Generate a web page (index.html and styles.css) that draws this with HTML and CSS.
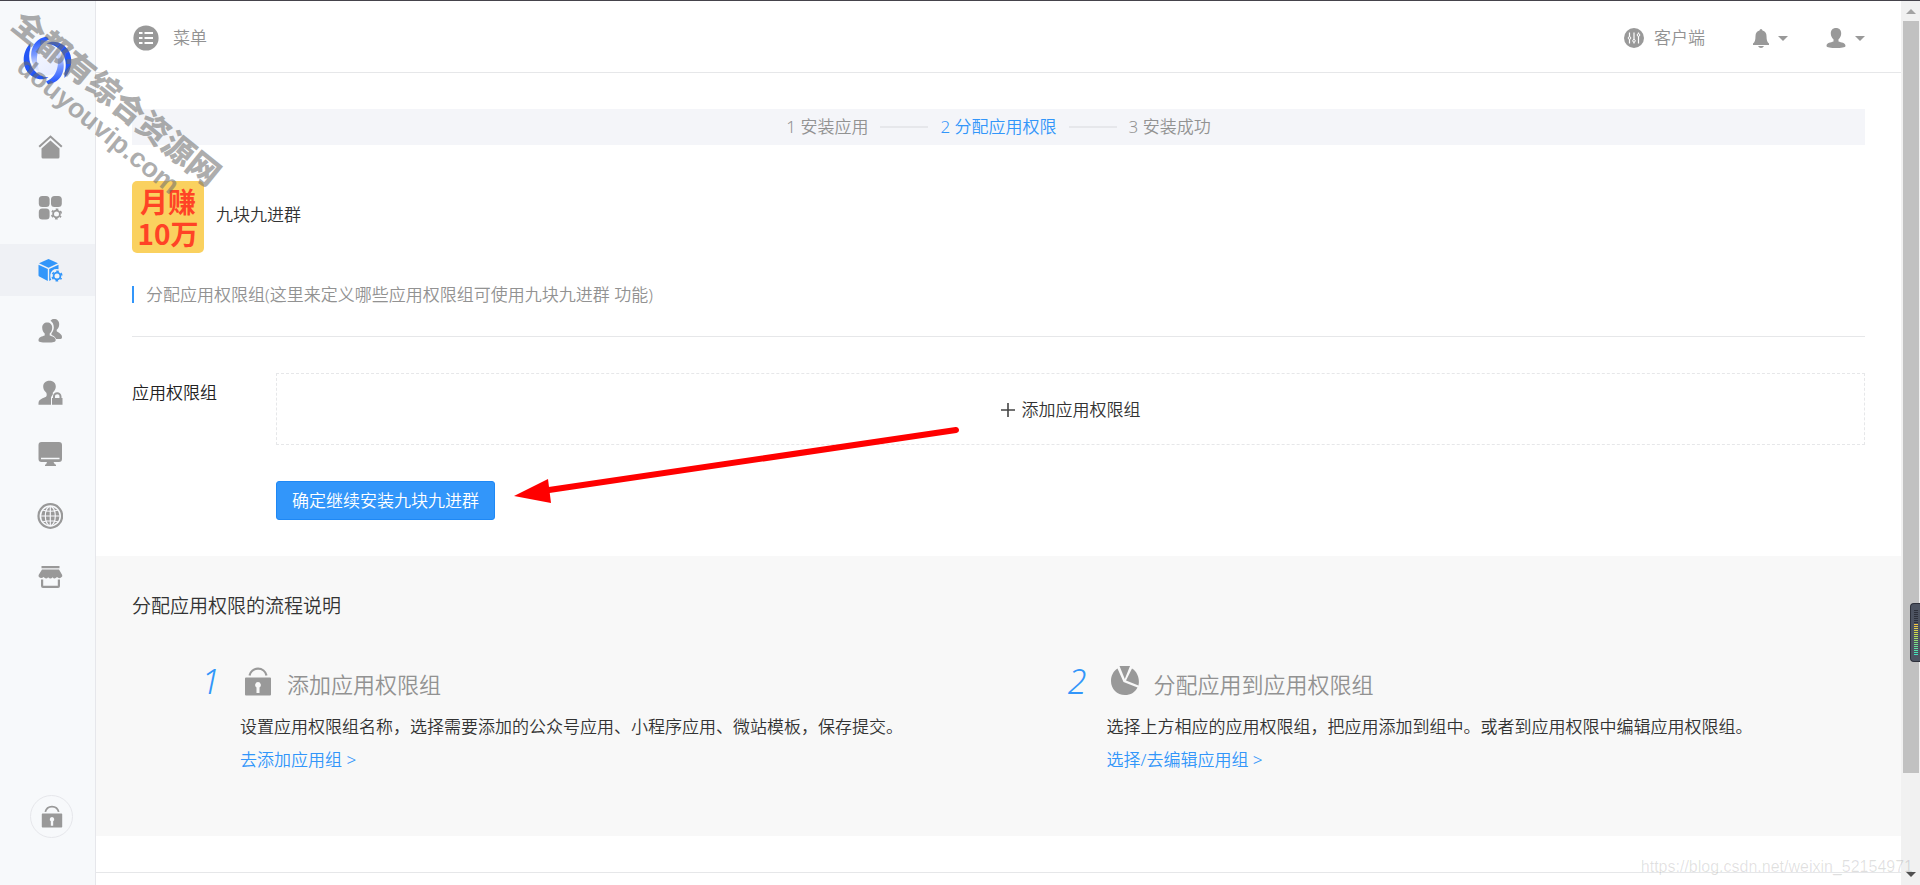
FILE: index.html
```html
<!DOCTYPE html>
<html lang="zh-CN">
<head>
<meta charset="utf-8">
<title>分配应用权限</title>
<link rel="stylesheet" href="styles.css">
</head>
<body>
<svg class="symbols" aria-hidden="true">
  <symbol id="gear" viewBox="0 0 12 12">
    <circle cx="6" cy="6" r="3.4" fill="none" stroke="currentColor" stroke-width="1.8"/>
    <circle cx="6" cy="6" r="4.8" fill="none" stroke="currentColor" stroke-width="1.6" stroke-dasharray="2.5 2.527" stroke-dashoffset="1.25" transform="rotate(30 6 6)"/>
  </symbol>
  <symbol id="lock" viewBox="0 0 28 32">
    <path d="M5.500 9.500a8.700 8.700 0 0 1 17 0" fill="none" stroke="currentColor" stroke-width="2.200"/>
    <path fill="currentColor" fill-rule="evenodd" d="M1 12.500q0-1 1-1h24q1 0 1 1v16q0 1-1 1H2q-1 0-1-1zM14 16a3 3 0 0 0-1.500 5.500v5.500h3v-5.500A3 3 0 0 0 14 16z"/>
  </symbol>
  <symbol id="person" viewBox="0 0 20 20">
    <path fill="currentColor" d="M10 0c3.300 0 5.200 2.200 5.200 5.500 0 2.600-1.200 4.400-2.700 5.700v2.300c2.500 1 7 1 7 4.500 0 1.500-4.500 2-9.500 2S.5 19.500.5 18c0-3.500 4.500-3.500 7-4.500v-2.300C6 9.900 4.800 8.100 4.800 5.500 4.800 2.200 6.700 0 10 0z"/>
  </symbol>
</svg>

<div class="page">
  <aside class="sidebar">
    <a class="brand" href="#" aria-label="首页">
      <svg width="50" height="50" viewBox="0 0 50 50" fill="none">
        <defs>
          <linearGradient id="ring" gradientUnits="userSpaceOnUse" x1="16" y1="4" x2="20" y2="40"><stop offset="0" stop-color="#2b5cff"/><stop offset=".4" stop-color="#7c9bff"/><stop offset="1" stop-color="#e4eaff" stop-opacity="0"/></linearGradient>
          <linearGradient id="core" x1="0" y1="0" x2="1" y2="1"><stop offset="0" stop-color="#f7f9ff"/><stop offset="1" stop-color="#e3e9ff"/></linearGradient>
        </defs>
        <circle cx="24.500" cy="24.500" r="15" fill="url(#core)"/>
        <g id="swirl">
          <path d="M7.500 7C-1 16-1 29 4.500 36c5 6.500 14 9.500 21 5.500C10 40 3 25 7.500 12z" fill="#2456f5"/>
          <path d="M24 .8C11 2 5.500 15 9.500 27c2 6 5 9 9 12C11 26 12.500 9 26 3.500z" fill="url(#ring)"/>
        </g>
        <use href="#swirl" transform="rotate(180 24.500 24.500)"/>
      </svg>
    </a>
    <nav class="nav" aria-label="主导航">
      <a class="nav-item" href="#" aria-label="主页"><svg class="nav-icon" viewBox="0 0 26 26"><path d="M2.200 12.800 13.500 2.500l11.300 10.300" fill="none" stroke="currentColor" stroke-width="2"/><path d="M4.500 14.500 13.500 6.500l9 8V23q0 1.500-1.500 1.500H6Q4.500 24.500 4.500 23z" fill="currentColor"/></svg></a>
      <a class="nav-item" href="#" aria-label="应用"><svg class="nav-icon" viewBox="0 0 26 26" fill="currentColor"><rect x="1.800" y="1" width="10.800" height="11" rx="3.500"/><rect x="14" y="1" width="10.800" height="11" rx="3.500"/><rect x="1.800" y="13.500" width="10.800" height="11" rx="3.500"/><use href="#gear" x="13.500" y="13" width="12" height="12"/></svg></a>
      <a class="nav-item active" href="#" aria-label="应用管理"><svg class="nav-icon" viewBox="0 0 26 26" fill="currentColor"><path d="M11.500 2 21 6.300l-9.500 4.400L2 6.300z"/><path d="M1.500 7.800 10.800 12v12L2.300 19.600q-.8-.4-.8-1.300z"/><path d="M12.200 12 21.500 7.800v4.400q-7-1-8.200 5.500-.3 3 1 5l-2.100 1.200z"/><use href="#gear" x="14" y="13" width="12" height="12"/></svg></a>
      <a class="nav-item" href="#" aria-label="用户"><svg class="nav-icon" viewBox="0 0 26 26" fill="currentColor"><path d="M13.500 2.700c1-1.300 2.300-1.700 3.700-1.700 3 0 5 2 5 5.200 0 2.600-1 4.200-2.500 5.600v1.500c1.500 1.500 5.300 2.500 5.300 5.700 0 1.200-.5 2-1.500 2h-4.500c-.8-2.500-3-3.200-4.500-4v-1.800c1.500-1.500 2.300-3.500 2.300-5.700 0-3-1-5.500-3.300-6.800z"/><path d="M10.200 4.500c3 0 5 2 5 5.300 0 2.600-1.200 4.500-2.500 5.800v1.900c2.500 1 6 1.500 6 4.500 0 2.300-2 2.500-8.500 2.500S1.500 24.300 1.500 22.300c0-3.300 3.700-3.800 6.200-4.800v-1.900c-1.300-1.300-2.500-3.200-2.500-5.800 0-3.300 2-5.300 5-5.300z" stroke="#f7f9fb" stroke-width="1" paint-order="stroke"/></svg></a>
      <a class="nav-item" href="#" aria-label="权限"><svg class="nav-icon" viewBox="0 0 26 26" fill="currentColor"><path d="M12.500.8c4 0 6.300 2.500 6.300 6 0 2.200-1.200 4-3 5.800v2.200c-1.500 1.500-1.800 2.200-1.800 4v6H1.500v-1.500c0-4.500 5-4.800 7.500-6.500 1-.8.800-2.700.3-4C7.300 11 6.200 9 6.200 6.800c0-3.500 2.300-6 6.300-6z"/><path d="M14 17.500h1.500v-1c0-3 2-4.800 4.700-4.800s4.800 1.800 4.800 4.800v1h1.500v8.300H14z" fill="#f7f9fb"/><path d="M15 18h1v-1.500c0-2.700 1.800-4.300 4.200-4.300s4.300 1.600 4.300 4.300V18h1v6.800H15zM18 18h4.500v-1.500c0-1.500-.8-2.300-2.200-2.300S18 15 18 16.500z" fill-rule="evenodd"/></svg></a>
      <a class="nav-item" href="#" aria-label="站点"><svg class="nav-icon" viewBox="0 0 26 26" fill="currentColor"><path fill-rule="evenodd" d="M4.500 1h17.500q3 0 3 3v14q0 3-3 3h-5.500l1.500 2.500h1V25H8v-1.500h1l1-2.500H4.500q-3 0-3-3V4q0-3 3-3zM4 16.800v1.400h18.500v-1.400z"/></svg></a>
      <a class="nav-item" href="#" aria-label="网络"><svg class="nav-icon" viewBox="0 0 26 26" fill="none" stroke="currentColor"><circle cx="13.300" cy="13" r="11.800" stroke-width="2.200"/><circle cx="13.300" cy="13" r="9.200" stroke="none" fill="currentColor"/><ellipse cx="13.300" cy="13" rx="5" ry="9.700" stroke="#f7f8fb" stroke-width="1.200"/><path d="M3.500 13h19.600M13.300 3v20M5.500 7q7.800 2.500 15.600 0M5.500 19q7.800-2.500 15.600 0" stroke="#f7f8fb" stroke-width="1.200"/></svg></a>
      <a class="nav-item" href="#" aria-label="商店"><svg class="nav-icon" viewBox="0 0 26 26" fill="currentColor"><path d="M4.500 2h18v2.200h-18zM5 5.500h17l3.200 5.500v1.500q-2.800 3-5.200.5-2.500 2.800-4.400.3-2.200 2.500-4.400 0-2.300 2.500-4.600-.3-2.600 2.300-5-.5V11z"/><path d="M4 15.500h2.200v6.300h14.600v-6.300H23V22q0 2-2 2H6q-2 0-2-2z"/></svg></a>
    </nav>
    <a class="sidebar-lock" href="#" aria-label="锁定"><svg width="22" height="26" viewBox="0 0 28 32"><use href="#lock"/></svg></a>
  </aside>

  <div class="content">
    <header class="topbar">
      <button class="top-button" type="button">
        <svg width="26" height="26" viewBox="0 0 26 26"><circle cx="13" cy="13" r="12.600" fill="#999"/><path d="M6 8h3.500M6 13h3.500M6 18h3.500M11.500 8H20M11.500 13H20M11.500 18H20" stroke="#fff" stroke-width="1.800"/></svg>
        <span>菜单</span>
      </button>
      <div class="top-actions">
        <a class="client" href="#">
          <svg width="20" height="20" viewBox="0 0 20 20"><circle cx="10" cy="10" r="10" fill="#999"/><path d="M5.500 4.500v11M10 4.500v11M14.500 4.500v11" stroke="#fff" stroke-width="1.200"/><g fill="#999" stroke="#fff"><circle cx="5.500" cy="10" r="1.300"/><circle cx="10" cy="12.800" r="1.300"/><circle cx="14.500" cy="7" r="1.300"/></g></svg>
          <span>客户端</span>
        </a>
        <button class="menu-button" type="button" aria-label="通知"><svg width="16" height="19" viewBox="0 0 16 19"><path fill="#999" d="M8 0q1.300 0 1.500 1.500Q13.500 2.500 13.500 7q0 6 2.500 7.500V16H0v-1.500Q2.500 13 2.500 7q0-4.500 4-5.500Q6.700 0 8 0zM5 17h6q-1 2-3 2t-3-2z"/></svg><span class="caret"></span></button>
        <button class="menu-button" type="button" aria-label="账户"><svg class="muted" width="20" height="20"><use href="#person"/></svg><span class="caret"></span></button>
      </div>
    </header>

    <main>
      <div class="section">
        <ol class="steps">
          <li>1 安装应用</li>
          <li class="current">2 分配应用权限</li>
          <li>3 安装成功</li>
        </ol>

        <div class="app">
          <div class="app-logo"><span>月赚</span><span>10万</span></div>
          <h1 class="app-name">九块九进群</h1>
        </div>

        <div class="group-title"><h2>分配应用权限组(这里来定义哪些应用权限组可使用九块九进群 功能)</h2></div>

        <form class="form">
          <label class="field-label" for="add-group">应用权限组</label>
          <button class="add-group" id="add-group" type="button">
            <svg width="14" height="14" viewBox="0 0 14 14"><path d="M7 0v14M0 7h14" stroke="#444" stroke-width="1.600"/></svg>
            <span>添加应用权限组</span>
          </button>
          <button class="submit" type="submit">确定继续安装九块九进群</button>
        </form>
      </div>

      <section class="guide">
        <h2>分配应用权限的流程说明</h2>
        <div class="guide-grid">
          <article class="guide-step">
            <div class="number">1</div>
            <div>
              <h3><svg class="muted" width="28" height="32"><use href="#lock"/></svg>添加应用权限组</h3>
              <p>设置应用权限组名称，选择需要添加的公众号应用、小程序应用、微站模板，保存提交。</p>
              <a href="#">去添加应用组 &gt;</a>
            </div>
          </article>
          <article class="guide-step">
            <div class="number">2</div>
            <div>
              <h3><svg width="28" height="30" viewBox="0 0 28 30" fill="#999"><path d="M8.500 0h10.500L13.800 13z"/><path d="M6.500 2.500 12.500 16l14 5.500C24 26.500 19.500 29 14 29 6 29 0 23 0 15 0 9.500 2.500 5 6.500 2.500z"/><path d="M21 2.500c5 3 8 10 6.500 17L15 14.500z"/></svg>分配应用到应用权限组</h3>
              <p>选择上方相应的应用权限组，把应用添加到组中。或者到应用权限中编辑应用权限组。</p>
              <a href="#">选择/去编辑应用组 &gt;</a>
            </div>
          </article>
        </div>
      </section>
    </main>
    <footer class="footer"></footer>
  </div>

  <div class="scrollbar" aria-hidden="true">
    <span class="arrow-up"></span>
    <span class="thumb"></span>
    <span class="arrow-down"></span>
  </div>
</div>

<svg class="pointer" width="450" height="84" viewBox="0 0 450 84" aria-hidden="true">
  <path d="M35 70 442 10" stroke="#f00" stroke-width="6" stroke-linecap="round"/>
  <path d="M0 76 34 59 37 83z" fill="#f00"/>
</svg>
<div class="site-mark"><span class="mark-name">全都有综合资源网</span><span class="mark-url">douyouvip.com</span></div>
<div class="meter" aria-hidden="true"><span class="meter-idle"></span><span class="meter-level"></span></div>
<div class="source-mark">https://blog.csdn.net/weixin_52154971</div>
</body>
</html>
```
FILE: styles.css
```css
* { box-sizing: border-box; }

body {
  position: relative;
  margin: 0;
  overflow: hidden;
  background: #fff;
  color: #333;
  font: 350 17px/24px "Noto Sans", "Noto Sans CJK SC", sans-serif;
}

h1, h2, h3, p, ol { margin: 0; padding: 0; font-weight: inherit; font-size: inherit; }
a { color: inherit; text-decoration: none; }
button { font: inherit; color: inherit; border: 0; background: none; padding: 0; cursor: pointer; }
svg { display: block; flex: none; }

.symbols { position: absolute; width: 0; height: 0; }
.muted { color: #999; }

.page { display: flex; min-height: 100vh; border-top: 1px solid #45434b; }

/* Sidebar */
.sidebar {
  display: flex;
  flex-direction: column;
  flex: none;
  width: 96px;
  padding: 35px 0 47px;
  background: #f7f9fb;
  border-right: 1px solid #e6e7eb;
  color: #999;
}
.brand { align-self: center; }
.nav {
  display: flex;
  flex-direction: column;
  justify-content: space-between;
  height: 482px;
  margin-top: 35px;
}
.nav-item { display: flex; align-items: center; height: 52px; padding-left: 37px; }
.nav-item.active { background: #eff1f5; color: #3296fa; }
.nav-icon { width: 26px; height: 26px; }
.sidebar-lock {
  display: flex;
  align-items: center;
  justify-content: center;
  width: 43px;
  height: 43px;
  margin: auto 0 0 30px;
  border: 1px solid #e6e7eb;
  border-radius: 50%;
}

/* Header */
.content { flex: 1; min-width: 0; }
.topbar {
  display: flex;
  align-items: center;
  justify-content: space-between;
  height: 72px;
  padding: 3px 36px 0 37px;
  border-bottom: 1px solid #e6e7e9;
  color: #929292;
}
.top-button { display: flex; align-items: center; gap: 14px; }
.top-actions { display: flex; align-items: center; }
.client { display: flex; align-items: center; gap: 10px; margin-right: 48px; }
.menu-button { display: flex; align-items: center; gap: 9px; }
.menu-button + .menu-button { margin-left: 38px; }
.caret { border: 5px solid transparent; border-top-color: #999; border-bottom: 0; }

/* Main section */
.section { padding: 36px; }
.steps {
  display: flex;
  align-items: center;
  justify-content: center;
  gap: 12px;
  height: 36px;
  list-style: none;
  background: #f4f5f9;
  color: #929292;
}
.steps li { display: flex; align-items: center; gap: 12px; }
.steps li + li::before { content: ""; width: 48px; height: 2px; background: #e6e7eb; }
.steps .current { color: #3296fa; }

.app { display: flex; align-items: center; gap: 12px; margin-top: 36px; }
.app-name { padding-bottom: 4px; }
.app-logo {
  display: flex;
  flex-direction: column;
  align-items: center;
  justify-content: center;
  width: 72px;
  height: 72px;
  border-radius: 5px;
  background: #fad15f;
  color: #ff4326;
  font: 700 28px/32px "Noto Sans CJK SC", sans-serif;
}

.group-title {
  margin-top: 33px;
  padding-bottom: 33px;
  border-bottom: 1px solid #e6e7e9;
  color: #929292;
}
.group-title h2 { padding-left: 12px; border-left: 2px solid #3296fa; line-height: 17px; }

.form {
  display: grid;
  grid-template-columns: 144px 1fr;
  row-gap: 36px;
  margin-top: 36px;
}
.field-label { padding-top: 8px; color: #222; }
.add-group {
  display: flex;
  align-items: center;
  justify-content: center;
  gap: 7px;
  height: 72px;
  padding-top: 2px;
  border: 1px dashed #e6e7e9;
}
.submit {
  grid-column: 2;
  justify-self: start;
  padding: 7px 15px 6px;
  border: 1px solid #1e88f5;
  border-radius: 3px;
  background: #3296fa;
  color: #fff;
}

/* Guide */
.guide { padding: 36px 36px 60px; background: #f8f8f8; }
.guide h2 { font-size: 19px; line-height: 28px; }
.guide-grid { display: grid; grid-template-columns: 1fr 1fr; margin-top: 46px; }
.guide-step { display: grid; grid-template-columns: 108px 1fr; }
.number {
  padding-right: 20px;
  color: #3296fa;
  font-size: 34px;
  line-height: 30px;
  font-style: italic;
  text-align: right;
}
.guide-step h3 {
  display: flex;
  align-items: center;
  gap: 15px;
  height: 36px;
  margin-bottom: 8px;
  padding-left: 4px;
  color: #929292;
  font-size: 22px;
}
.guide-step h3 svg { align-self: flex-start; }
.guide-step p, .guide-step a { display: block; line-height: 33px; }
.guide-step a { color: #3296fa; }

.footer { margin-top: 36px; border-top: 1px solid #e6e7e9; }

/* Scrollbar column */
.scrollbar {
  display: flex;
  flex-direction: column;
  flex: none;
  align-items: center;
  width: 19px;
  padding: 8px 0;
  background: #f1f1f1;
}
.thumb { width: 16px; height: 752px; margin-top: 7px; background: #c1c1c1; }
.arrow-up { border: 5px solid transparent; border-top: 0; border-bottom-color: #a3a3a3; }
.arrow-down { margin-top: auto; border: 5px solid transparent; border-bottom: 0; border-top-color: #505050; }

/* Overlays */
.pointer { position: absolute; left: 514px; top: 420px; }

.site-mark {
  position: absolute;
  left: -24px;
  top: 74px;
  display: flex;
  flex-direction: column;
  align-items: center;
  width: 264px;
  color: rgba(110, 110, 110, .56);
  font-weight: 900;
  transform: rotate(39deg);
  pointer-events: none;
}
.mark-name { font: 900 32px/38px "Noto Sans CJK SC", sans-serif; }
.mark-url { padding-left: 6px; font: 700 27px/32px "Liberation Sans", sans-serif; }

.meter {
  position: absolute;
  right: 0;
  top: 603px;
  display: flex;
  flex-direction: column;
  width: 10px;
  height: 59px;
  padding: 6px 2px 6px 3px;
  border: 1px solid #2d303b;
  border-right: 0;
  border-radius: 4px 0 0 4px;
  background: #4d5361;
}
.meter-idle { height: 14px; background: repeating-linear-gradient(#2d303b 0 1px, #4d5361 1px 2px); }
.meter-level {
  flex: 1;
  background: repeating-linear-gradient(transparent 0 1px, #4d5361 1px 2px), linear-gradient(#f5c542, #c5e04e 35%, #7ee081 60%, #3fe3c0);
}

.source-mark {
  position: absolute;
  right: 7px;
  bottom: 6px;
  color: rgba(0, 0, 0, .12);
  font: 400 16px/24px "Liberation Sans", sans-serif;
}
```
